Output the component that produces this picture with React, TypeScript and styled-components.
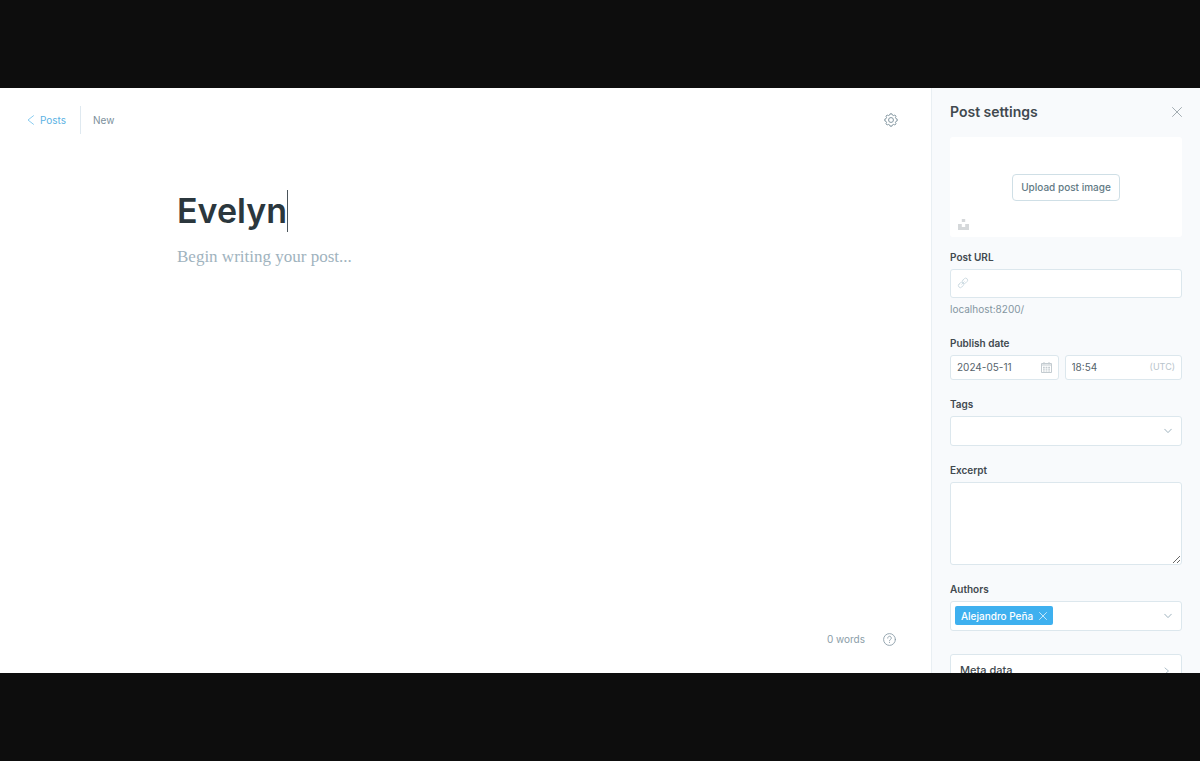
import React, { useState } from "react";
import styled, { createGlobalStyle } from "styled-components";

const GlobalStyle = createGlobalStyle`
  *, *::before, *::after { box-sizing: border-box; }
  body {
    margin: 0;
    background: #0d0d0d;
    font-family: Inter, "Liberation Sans", sans-serif;
    font-size: 10px;
    line-height: 16px;
    color: #41494f;
  }
  button, input, select, textarea { font: inherit; color: inherit; margin: 0; }
  svg { display: block; flex: none; }
`;

const Screen = styled.div`
  display: flex;
  height: 100vh;
  padding: 88px 0;
  overflow: hidden;
`;

const Editor = styled.main`
  flex: 1;
  min-width: 0;
  display: flex;
  flex-direction: column;
  background: #fff;
`;

const TopBar = styled.header`
  display: flex;
  align-items: center;
  justify-content: space-between;
  padding: 18px 33px 0 27px;
`;

const Crumbs = styled.nav`
  display: flex;
  align-items: center;
  color: #7c8f9c;
`;

const BackLink = styled.a`
  display: flex;
  align-items: center;
  gap: 5px;
  height: 28px;
  padding-right: 14px;
  margin-right: 12px;
  border-right: 1px solid #dfe9f0;
  color: #5bb2e4;
  text-decoration: none;
`;

const IconButton = styled.button`
  display: grid;
  place-items: center;
  padding: 0;
  border: 0;
  background: none;
`;

const Canvas = styled.section`
  flex: 1;
  padding: 54px 177px 0;
`;

const TitleRow = styled.div`
  display: flex;
  align-items: center;
  height: 45px;
`;

const TitleInput = styled.input`
  field-sizing: content;
  min-width: 0;
  height: 45px;
  padding: 0;
  border: 0;
  outline: 0;
  background: none;
  color: #2b373d;
  font-size: 34px;
  line-height: 45px;
  font-weight: 600;
`;

const Caret = styled.span`
  width: 1px;
  height: 42px;
  background: #4a545a;
`;

const BodyInput = styled.textarea`
  display: block;
  width: 100%;
  height: 24px;
  margin-top: 12px;
  padding: 0;
  border: 0;
  outline: 0;
  resize: none;
  overflow: hidden;
  background: none;
  font-family: "Liberation Serif", serif;
  font-size: 17px;
  line-height: 24px;
  &::placeholder { color: #9fb3be; opacity: 1; }
`;

const StatusBar = styled.footer`
  display: flex;
  align-items: center;
  justify-content: flex-end;
  gap: 18px;
  padding: 0 35px 26px;
  color: #8b9da8;
`;

const Sidebar = styled.aside`
  width: 269px;
  flex: none;
  padding: 16px 18px 0;
  overflow: hidden;
  border-left: 1px solid #e9eff3;
  background: #f8fafc;
`;

const SidebarHeader = styled.div`
  display: flex;
  align-items: center;
  justify-content: space-between;
  margin-bottom: 17px;
`;

const SidebarTitle = styled.h1`
  margin: 0;
  font-size: 14px;
  line-height: 16px;
  font-weight: 600;
`;

const UploadBox = styled.div`
  position: relative;
  display: grid;
  place-items: center;
  height: 100px;
  margin-bottom: 12px;
  border-radius: 3px;
  background: #fff;
`;

const UploadButton = styled.button`
  height: 27px;
  padding: 0 8px;
  border: 1px solid #cfdfe6;
  border-radius: 4px;
  background: #fff;
  color: #627a84;
  font-weight: 500;
`;

const StockButton = styled(IconButton)`
  position: absolute;
  left: 8px;
  bottom: 7px;
`;

const Field = styled.div<{ $gap: number }>`
  margin-bottom: ${(p) => p.$gap}px;
`;

const Label = styled.label`
  display: block;
  margin-bottom: 4px;
  font-weight: 600;
`;

const Box = styled.div<{ $height: number }>`
  display: flex;
  align-items: center;
  height: ${(p) => p.$height}px;
  padding: 0 6px 1px;
  border: 1px solid #dce7ed;
  border-radius: 3px;
  background: #fff;
`;

const BareInput = styled.input`
  flex: 1;
  min-width: 0;
  width: 100%;
  padding: 0;
  border: 0;
  outline: 0;
  background: none;
  color: #55636b;
`;

const BareSelect = styled.select`
  flex: 1;
  min-width: 0;
  height: 100%;
  padding: 0;
  border: 0;
  outline: 0;
  appearance: none;
  background: none;
`;

const Help = styled.p`
  margin: 3px 0 0;
  color: #8496a1;
`;

const DateRow = styled.div`
  display: grid;
  grid-template-columns: 109fr 118fr;
  gap: 6px;
`;

const Zone = styled.span`
  color: #b8c4cb;
  font-size: 9px;
`;

const Excerpt = styled.textarea`
  display: block;
  width: 100%;
  height: 83px;
  padding: 6px;
  border: 1px solid #dce7ed;
  border-radius: 3px;
  outline: 0;
  background: #fff;
`;

const Token = styled.span`
  display: flex;
  align-items: center;
  gap: 6px;
  height: 19px;
  margin-left: -2px;
  padding: 0 6px;
  border-radius: 2px;
  background: #3eb0ef;
  color: #fff;
  font-weight: 500;
`;

const ChevronSlot = styled.span`
  padding-right: 3px;
  pointer-events: none;
`;

const MetaButton = styled.button`
  display: flex;
  align-items: flex-start;
  justify-content: space-between;
  width: 100%;
  height: 48px;
  padding: 7px 10px 7px 9px;
  border: 1px solid #dce7ed;
  border-radius: 3px;
  background: #fff;
  font-size: 11px;
  font-weight: 500;
`;

const MetaArrow = styled.span`
  padding-top: 5px;
`;

type StrokeProps = { width: number; height: number; d: string; color: string };

const Stroke = ({ width, height, d, color }: StrokeProps) => (
  <svg width={width} height={height} viewBox={`0 0 ${width} ${height}`} fill="none" stroke={color} strokeLinecap="round" strokeLinejoin="round" aria-hidden="true">
    <path d={d} />
  </svg>
);

const Chevron = () => (
  <ChevronSlot>
    <Stroke width={8} height={6} d="M.7 1.2 4 4.6 7.3 1.2" color="#9fb3be" />
  </ChevronSlot>
);

const GearIcon = () => (
  <svg width="14" height="14" viewBox="0 0 24 24" fill="none" stroke="#7b8f9a" strokeWidth="1.6" strokeLinejoin="round" aria-hidden="true">
    <circle cx="12" cy="12" r="4.2" />
    <path d="M9.8 3.4 10.4 1.4h3.2l.6 2 2.3 1 2-1 2.1 2.1-1 2 1 2.3 2 .6v3.2l-2 .6-1 2.3 1 2-2.1 2.1-2-1-2.3 1-.6 2h-3.2l-.6-2-2.3-1-2 1-2.1-2.1 1-2-1-2.3-2-.6v-3.2l2-.6 1-2.3-1-2 2.1-2.1 2 1z" />
  </svg>
);

const HelpIcon = () => (
  <svg width="13" height="13" viewBox="0 0 13 13" fill="none" stroke="#8b9da8" strokeWidth=".9" strokeLinecap="round" aria-hidden="true">
    <circle cx="6.5" cy="6.5" r="5.9" />
    <path d="M4.7 5.1a1.8 1.8 0 1 1 2.8 1.4c-.7.4-1 .7-1 1.3M6.5 9.5v.1" />
  </svg>
);

const LinkIcon = () => (
  <svg width="12" height="12" viewBox="0 0 24 24" fill="none" stroke="#cddae2" strokeWidth="1.8" strokeLinecap="round" aria-hidden="true">
    <rect x="10.2" y="3.6" width="11.6" height="8" rx="4" transform="rotate(-45 16 7.6)" />
    <rect x="2.2" y="12" width="11.6" height="8" rx="4" transform="rotate(-45 8 16)" />
    <path d="m9.5 14.5 5-5" />
  </svg>
);

const CalendarIcon = () => (
  <svg width="11" height="11" viewBox="0 0 11 11" fill="none" stroke="#c3cbd0" aria-hidden="true">
    <path d="M.5 1.5h10v9H.5zM.5 3h10M3 0v2.4M8 0v2.4" />
    <path d="M2 5.4h7M2 7.2h7M2 9h7" strokeWidth="1.2" strokeDasharray="1.8 .8" />
  </svg>
);

const StockIcon = () => (
  <svg width="11" height="11" viewBox="0 0 11 11" fill="#d5d8da" aria-hidden="true">
    <path d="M3.8 0h3.4v3.1H3.8zM0 5h3.8v3h3.4V5H11v6H0z" />
  </svg>
);

export default function App() {
  const [title, setTitle] = useState("Evelyn");
  return (
    <Screen>
      <GlobalStyle />
      <Editor>
        <TopBar>
          <Crumbs>
            <BackLink href="#posts">
              <Stroke width={8} height={10} d="M6.5.7 1 5l5.5 4.3" color="#8accf0" />
              Posts
            </BackLink>
            <span>New</span>
          </Crumbs>
          <IconButton type="button" aria-label="Settings">
            <GearIcon />
          </IconButton>
        </TopBar>
        <Canvas>
          <TitleRow>
            <TitleInput aria-label="Post title" value={title} onChange={(e) => setTitle(e.target.value)} />
            <Caret />
          </TitleRow>
          <BodyInput aria-label="Post body" placeholder="Begin writing your post..." />
        </Canvas>
        <StatusBar>
          <span>0 words</span>
          <IconButton type="button" aria-label="Help">
            <HelpIcon />
          </IconButton>
        </StatusBar>
      </Editor>
      <Sidebar>
        <SidebarHeader>
          <SidebarTitle>Post settings</SidebarTitle>
          <IconButton type="button" aria-label="Close">
            <Stroke width={10} height={10} d="M.5.5l9 9M9.5.5l-9 9" color="#a3adb2" />
          </IconButton>
        </SidebarHeader>
        <UploadBox>
          <UploadButton type="button">Upload post image</UploadButton>
          <StockButton type="button" aria-label="Stock photos">
            <StockIcon />
          </StockButton>
        </UploadBox>
        <Field $gap={18}>
          <Label htmlFor="url">Post URL</Label>
          <Box $height={29}>
            <LinkIcon />
            <BareInput id="url" />
          </Box>
          <Help>localhost:8200/</Help>
        </Field>
        <Field $gap={16}>
          <Label htmlFor="date">Publish date</Label>
          <DateRow>
            <Box $height={25}>
              <BareInput id="date" defaultValue="2024-05-11" />
              <CalendarIcon />
            </Box>
            <Box $height={25}>
              <BareInput aria-label="Publish time" defaultValue="18:54" />
              <Zone>(UTC)</Zone>
            </Box>
          </DateRow>
        </Field>
        <Field $gap={16}>
          <Label htmlFor="tags">Tags</Label>
          <Box $height={30}>
            <BareSelect id="tags" />
            <Chevron />
          </Box>
        </Field>
        <Field $gap={16}>
          <Label htmlFor="excerpt">Excerpt</Label>
          <Excerpt id="excerpt" />
        </Field>
        <Field $gap={23}>
          <Label htmlFor="authors">Authors</Label>
          <Box $height={30}>
            <Token>
              Alejandro Peña
              <IconButton type="button" aria-label="Remove Alejandro Peña">
                <Stroke width={8} height={8} d="M.5.5l7 7M7.5.5l-7 7" color="#c4e6fa" />
              </IconButton>
            </Token>
            <BareSelect id="authors" />
            <Chevron />
          </Box>
        </Field>
        <MetaButton type="button">
          Meta data
          <MetaArrow>
            <Stroke width={8} height={8} d="M2 1l3.5 3L2 7" color="#aebfc9" />
          </MetaArrow>
        </MetaButton>
      </Sidebar>
    </Screen>
  );
}
